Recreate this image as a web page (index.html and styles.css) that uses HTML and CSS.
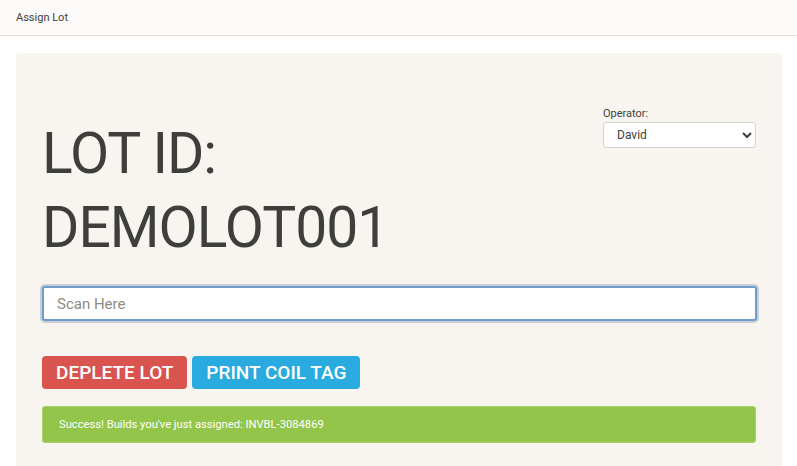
FILE: index.html
```html
<!DOCTYPE html>
<html>
<head>
<meta charset="utf-8">
<link rel="stylesheet" href="styles.css">
</head>
<body>
<header class="topbar">Assign Lot</header>
<main class="card">
  <div class="head-row">
    <h1 class="lot-title">LOT ID:<br>DEMOLOT001</h1>
    <div class="operator">
      <label class="op-label" for="op">Operator:</label>
      <select id="op" class="op-select">
        <option>David</option>
      </select>
    </div>
  </div>
  <input class="scan" type="text" placeholder="Scan Here">
  <div class="actions">
    <button class="btn btn-danger">DEPLETE LOT</button>
    <button class="btn btn-info">PRINT COIL TAG</button>
  </div>
  <div class="alert">Success! Builds you've just assigned: INVBL-3084869</div>
</main>
</body>
</html>
```

FILE: styles.css
```css
html, body {
  margin: 0;
  padding: 0;
  background: #ffffff;
  font-family: Roboto, "Liberation Sans", sans-serif;
  color: #3e3f3a;
  overflow: hidden;
}

.topbar {
  height: 36px;
  box-sizing: border-box;
  padding: 11px 16px 0;
  font-size: 11px;
  line-height: 14px;
  background: #fcfaf8;
  border-bottom: 1px solid #e9e0d6;
  color: #3e3f3a;
}

.card {
  margin: 17px 15px 0 16px;
  background: #f8f5f0;
  border-radius: 4px 4px 0 0;
  padding: 51px 25px 30px 26px;
}

.head-row {
  display: flex;
  justify-content: space-between;
  align-items: flex-start;
}

.lot-title {
  margin: 13px 0 0 0;
  font-size: 57px;
  letter-spacing: -1px;
  line-height: 74px;
  font-weight: 400;
  color: #3e3f3a;
}

.operator {
  display: flex;
  flex-direction: column;
  width: 153px;
  margin-right: 1px;
}

.op-label {
  font-size: 11px;
  line-height: 16px;
  padding-top: 2px;
  height: 18px;
  box-sizing: border-box;
}

.op-select {
  height: 26px;
  font-family: Roboto, "Liberation Sans", sans-serif;
  font-size: 12px;
  color: #3e3f3a;
  background: #ffffff;
  border: 1px solid #d8d3cc;
  border-radius: 3px;
  padding: 0 8px 0 9px;
}

.scan {
  display: block;
  box-sizing: border-box;
  width: 100%;
  height: 35px;
  margin-top: 21px;
  padding: 0 13px;
  font-family: Roboto, "Liberation Sans", sans-serif;
  font-size: 15px;
  color: #3e3f3a;
  background: #ffffff;
  border: 2px solid #6f9ccd;
  border-radius: 3px;
  box-shadow: 0 0 0 2px #c9ced6;
  outline: none;
}

.scan::placeholder {
  color: #8e8c84;
}

.actions {
  display: flex;
  gap: 5px;
  margin-top: 35px;
}

.btn {
  height: 33px;
  padding: 0 14px;
  border: none;
  border-radius: 4px;
  color: #ffffff;
  font-family: Roboto, "Liberation Sans", sans-serif;
  font-size: 19px;
  font-weight: 500;
  line-height: 33px;
}

.btn-danger {
  background: #d9534f;
}

.btn-info {
  background: #29abe0;
}

.alert {
  margin-top: 17px;
  margin-right: 1px;
  height: 37px;
  box-sizing: border-box;
  padding: 0 16px;
  display: flex;
  align-items: center;
  background: #93c54b;
  border: 1px solid #a6cf6c;
  border-radius: 3px;
  color: #ffffff;
  font-size: 11.2px;
}
```
